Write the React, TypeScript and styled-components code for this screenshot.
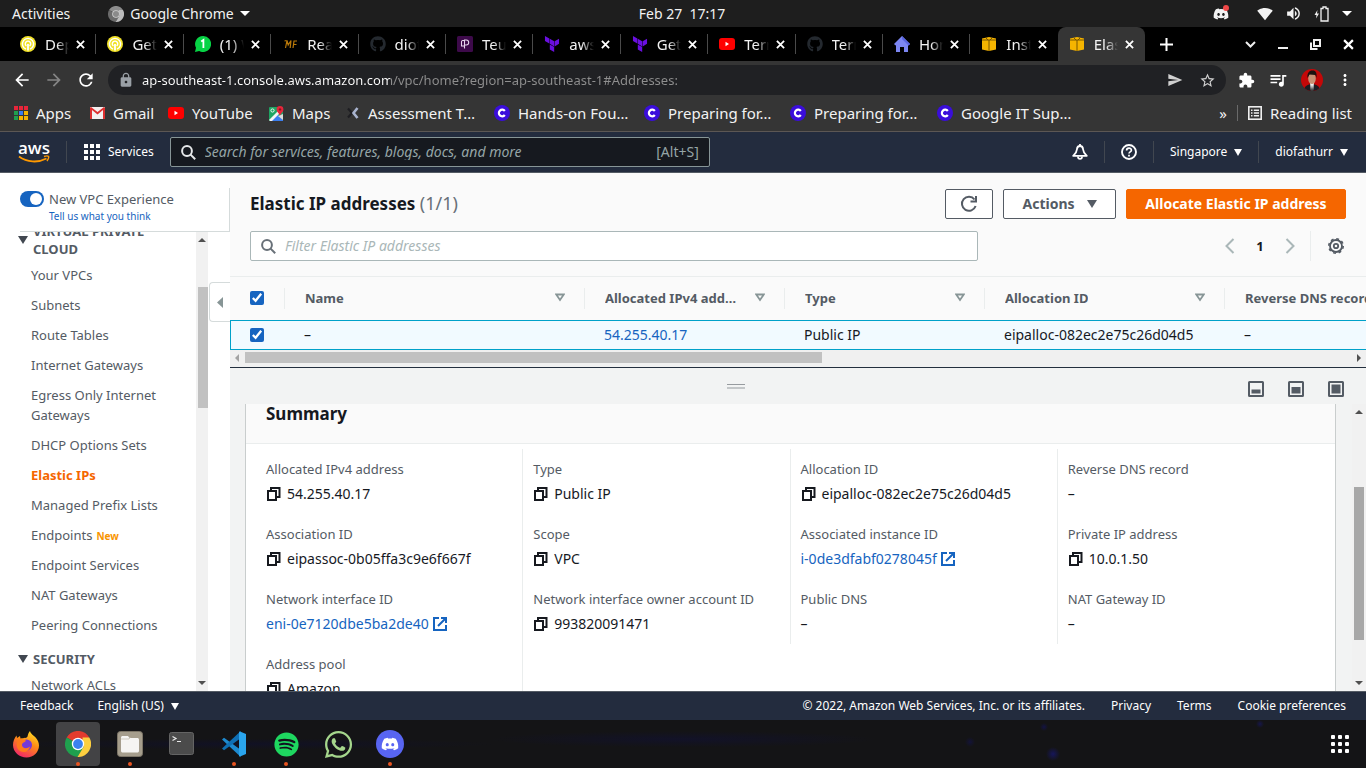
import React from "react";
import styled, { createGlobalStyle, css } from "styled-components";
import { FaDiscord, FaGithub, FaWhatsapp, FaSpotify } from "react-icons/fa";
import { SiTerraform } from "react-icons/si";
import {
  MdArrowBack,
  MdArrowForward,
  MdRefresh,
  MdLock,
  MdSend,
  MdStarBorder,
  MdExtension,
  MdQueueMusic,
  MdMoreVert,
  MdSignalWifi4Bar,
  MdVolumeUp,
} from "react-icons/md";

const GlobalStyle = createGlobalStyle`
  * { box-sizing: border-box; }
  html, body, #root { height: 100%; }
  body { margin: 0; background: #161616; font-family: "Noto Sans", "Open Sans", sans-serif; font-size: 13px; }
  button { font: inherit; color: inherit; background: none; border: 0; padding: 0; cursor: pointer; }
  input { font: inherit; }
  a { text-decoration: none; color: inherit; }
  svg { display: block; flex: none; }
  ul { list-style: none; margin: 0; padding: 0; }
  h1, h2, h3, p, dl, dd, dt { margin: 0; font-weight: normal; }
`;

const Desktop = styled.div`
  display: flex;
  flex-direction: column;
  height: 100vh;
  overflow: hidden;
`;

/* ---------- desktop top bar ---------- */

const TopBar = styled.header`
  display: grid;
  grid-template-columns: 1fr auto 1fr;
  align-items: center;
  flex: none;
  height: 27px;
  padding: 0 14px 0 12px;
  background: #1e1e1e;
  color: #f2f2f2;
  font-size: 14px;
  line-height: 20px;
`;

const TopGroup = styled.div<{ $end?: boolean }>`
  display: flex;
  align-items: center;
  justify-content: ${(p) => (p.$end ? "flex-end" : "flex-start")};
  gap: ${(p) => (p.$end ? "12px" : "38px")};
`;

const AppMenu = styled.button`
  display: flex;
  align-items: center;
  gap: 6px;
`;

const TrayDiscord = styled.span`
  position: relative;
  margin-right: 16px;
`;

const TrayDot = styled.span`
  position: absolute;
  top: -1px;
  right: 0;
  width: 6px;
  height: 6px;
  border-radius: 50%;
  background: #f04848;
`;

/* ---------- browser ---------- */

const TabStrip = styled.div`
  display: flex;
  flex: none;
  height: 34px;
  padding-left: 9px;
  background: #000;
  color: #f2f2f2;
`;

const TabList = styled.div`
  display: flex;
  flex: 1;
  min-width: 0;
`;

const Tab = styled.div<{ $active?: boolean; $divider?: boolean }>`
  display: flex;
  flex: 1 1 0;
  min-width: 0;
  align-items: center;
  padding: 0 11px;
  position: relative;
  ${(p) =>
    p.$active &&
    css`
      background: #353535;
      border-radius: 8px 8px 0 0;
    `}
  ${(p) =>
    p.$divider &&
    css`
      &::after {
        content: "";
        position: absolute;
        right: 0;
        top: 7px;
        height: 20px;
        width: 1px;
        background: #4a4a4a;
      }
    `}
`;

const TabButton = styled.button`
  display: flex;
  align-items: center;
  flex: 1;
  min-width: 0;
  gap: 9px;
  text-align: left;
`;

const TabTitle = styled.span`
  flex: 1;
  min-width: 0;
  overflow: hidden;
  white-space: nowrap;
  font-size: 15px;
  line-height: 20px;
  mask-image: linear-gradient(to right, #000 50%, transparent 100%);
`;

const TabClose = styled.button`
  margin-left: 7px;
`;

const WindowControls = styled.div`
  display: flex;
  align-items: center;
  flex: none;
  width: 221px;
  padding: 0 12px 0 15px;
`;

const ControlGroup = styled.div`
  display: flex;
  align-items: center;
  gap: 22px;
  margin-left: auto;
`;

const Toolbar = styled.div`
  display: flex;
  align-items: center;
  flex: none;
  height: 38px;
  padding: 0 12px;
  gap: 12px;
  background: #353535;
  color: #fff;
`;

const Omnibox = styled.div`
  display: flex;
  align-items: center;
  flex: 1;
  height: 30px;
  padding: 0 10px;
  gap: 8px;
  border-radius: 15px;
  background: #202124;
  color: #9aa0a6;
`;

const UrlInput = styled.input`
  flex: 1;
  min-width: 0;
  border: 0;
  outline: 0;
  padding: 0;
  height: 20px;
  font-size: 13px;
  color: transparent;
  background: linear-gradient(to right, #fff 248px, #8f8f8f 248px);
  background-clip: text;
  -webkit-background-clip: text;
`;

const OmniActions = styled.div`
  display: flex;
  gap: 16px;
  color: #d0d0d0;
`;

const ToolbarEnd = styled.div`
  display: flex;
  align-items: center;
  gap: 13px;
`;

const Bookmarks = styled.nav`
  display: flex;
  align-items: center;
  flex: none;
  height: 33px;
  padding: 0 14px 4px 14px;
  background: #353535;
  border-bottom: 1px solid #5c5754;
  color: #f2f2f2;
  font-size: 15px;
  line-height: 20px;
`;

const Bookmark = styled.a<{ $width?: number }>`
  display: flex;
  align-items: center;
  gap: 8px;
  flex: none;
  width: ${(p) => (p.$width ? `${p.$width}px` : "auto")};
  white-space: nowrap;
`;

const BookmarkEnd = styled.div`
  display: flex;
  align-items: center;
  gap: 10px;
  margin-left: auto;
`;

const Rule = styled.span<{ $height: number; $color: string }>`
  width: 1px;
  height: ${(p) => p.$height}px;
  background: ${(p) => p.$color};
  flex: none;
`;

/* ---------- console navigation ---------- */

const ConsoleNav = styled.nav`
  display: flex;
  align-items: center;
  flex: none;
  height: 41px;
  padding: 0 18px;
  background: #232c3e;
  border-bottom: 1px solid #545b64;
  color: #fff;
  font-size: 12px;
  line-height: 16px;
`;

const AwsLogo = styled.a`
  display: flex;
  flex-direction: column;
  align-items: center;
  width: 32px;
  margin-right: 16px;
  font: 600 17px/14px "Open Sans", sans-serif;
`;

const ServicesButton = styled.button`
  display: flex;
  align-items: center;
  gap: 8px;
  margin: 0 16px 0 17px;
`;

const ConsoleSearch = styled.label`
  display: flex;
  align-items: center;
  width: 540px;
  height: 30px;
  padding: 0 10px;
  gap: 9px;
  background: #16191f;
  border: 1px solid #879596;
  border-radius: 2px;
  font-size: 14px;
`;

const PlainInput = styled.input<{ $hint: string }>`
  flex: 1;
  min-width: 0;
  border: 0;
  outline: 0;
  padding: 0;
  background: none;
  font-size: 14px;
  &::placeholder {
    color: ${(p) => p.$hint};
    font-style: italic;
    opacity: 1;
  }
`;

const Shortcut = styled.span`
  color: #95a5a6;
`;

const NavEnd = styled.div`
  display: flex;
  align-items: center;
  gap: 16px;
  margin-left: auto;
`;

const NavMenu = styled.button`
  display: flex;
  align-items: center;
  gap: 7px;
`;

/* ---------- console body ---------- */

const Body = styled.div`
  display: flex;
  flex: 1;
  min-height: 0;
  background: #fff;
  color: #16191f;
  line-height: 20px;
`;

const Sidebar = styled.aside`
  display: flex;
  flex-direction: column;
  flex: none;
  width: 230px;
  position: relative;
  background: #fff;
  color: #545b64;
`;

const SidebarHead = styled.div`
  flex: none;
  height: 44px;
  margin-top: 15px;
  margin-left: 20px;
  border-right: 1px solid #d5dbdb;
  border-bottom: 1px solid #d5dbdb;
`;

const SwitchLabel = styled.label`
  display: flex;
  align-items: center;
  gap: 5px;
  height: 21px;
`;

const Switch = styled.input`
  appearance: none;
  width: 24px;
  height: 16px;
  margin: 0;
  border-radius: 8px;
  background: #1664c0;
  &::before {
    content: "";
    display: block;
    width: 12px;
    height: 12px;
    margin: 2px 2px 2px 10px;
    border-radius: 50%;
    background: #fff;
  }
`;

const FeedbackLink = styled.a`
  display: block;
  margin-left: 29px;
  color: #1664c0;
  font-size: 10px;
  line-height: 14px;
`;

const SidebarScroll = styled.div`
  display: flex;
  flex: 1;
  min-height: 0;
  overflow: hidden;
  margin-right: 22px;
`;

const NavList = styled.div`
  flex: 1;
  margin-top: -10px;
`;

const NavHeading = styled.h3`
  display: flex;
  align-items: center;
  gap: 5px;
  padding: 0 30px 0 18px;
  font-weight: bold;
  font-size: 13px;
  line-height: 18px;
`;

const NavGroup = styled.ul`
  padding: 2px 8px 10px 31px;
`;

const NavItem = styled.li`
  padding: 5px 0;
`;

const NavLink = styled.a<{ $active?: boolean }>`
  color: ${(p) => (p.$active ? "#f56600" : "#545b64")};
  font-weight: ${(p) => (p.$active ? "bold" : "normal")};
`;

const NewTag = styled.span`
  margin-left: 4px;
  color: #f89400;
  font-size: 10px;
  line-height: 12px;
  font-weight: bold;
`;

const VScroll = styled.div<{ $width: number }>`
  display: flex;
  flex-direction: column;
  align-items: center;
  flex: none;
  width: ${(p) => p.$width}px;
  padding: 6px 0;
  background: #f1f1f1;
`;

const VTrack = styled.div<{ $inset: number }>`
  flex: 1;
  width: 100%;
  display: flex;
  flex-direction: column;
  align-items: flex-end;
  padding-right: ${(p) => p.$inset}px;
`;

const VThumb = styled.div<{ $before: number; $size: number; $after: number; $color: string }>`
  width: 10px;
  height: ${(p) => (p.$size / (p.$before + p.$size + p.$after)) * 100}%;
  margin-top: ${(p) => p.$before}px;
  background: ${(p) => p.$color};
`;

const CollapseButton = styled.button`
  position: absolute;
  right: 0;
  top: 109px;
  width: 21px;
  height: 40px;
  display: flex;
  align-items: center;
  justify-content: center;
  background: #fff;
  border: 1px solid #d5dbdb;
  border-right: 0;
  border-radius: 4px 0 0 4px;
`;

const Main = styled.main`
  display: flex;
  flex-direction: column;
  flex: 1;
  min-width: 0;
  background: #fafafa;
`;

const PageHead = styled.div`
  display: flex;
  align-items: center;
  flex: none;
  gap: 10px;
  padding: 15px 20px 12px 20px;
`;

const Title = styled.h1`
  flex: 1;
  font-size: 17px;
  line-height: 30px;
  font-weight: bold;
`;

const Count = styled.span`
  color: #687078;
  font-size: 18px;
  font-weight: normal;
`;

const Button = styled.button<{ $primary?: boolean; $width: number }>`
  display: flex;
  align-items: center;
  justify-content: center;
  gap: 12px;
  min-width: ${(p) => p.$width}px;
  height: 30px;
  border: 1px solid ${(p) => (p.$primary ? "#f56600" : "#545b64")};
  border-radius: 2px;
  background: ${(p) => (p.$primary ? "#f56600" : "#fff")};
  color: ${(p) => (p.$primary ? "#fff" : "#545b64")};
  font-size: 14px;
  font-weight: bold;
`;

const FilterRow = styled.div`
  display: flex;
  align-items: center;
  justify-content: space-between;
  flex: none;
  padding: 0 20px 15px 20px;
`;

const FilterBox = styled.label`
  display: flex;
  align-items: center;
  width: 66.4%;
  height: 30px;
  padding: 0 10px;
  gap: 9px;
  background: #fff;
  border: 1px solid #aab7b8;
  border-radius: 2px;
`;

const Pagination = styled.div`
  display: flex;
  align-items: center;
  height: 30px;
`;

const PageStep = styled.button`
  width: 20px;
  display: flex;
  justify-content: center;
`;

const PageNumber = styled.button`
  width: 40px;
  font-weight: bold;
`;

const GearButton = styled.button`
  margin-left: 10px;
  padding: 0 2px 0 17px;
  height: 30px;
  border-left: 1px solid #eaeded;
`;

const TableWrap = styled.div`
  overflow: hidden;
  flex: none;
  border-top: 1px solid #eaeded;
`;

const Table = styled.table`
  table-layout: fixed;
  width: 1264px;
  border-collapse: separate;
  border-spacing: 0;
  th,
  td {
    padding: 0 20px;
    text-align: left;
    white-space: nowrap;
  }
  th {
    height: 43px;
    padding-bottom: 2px;
    color: #545b64;
    font-weight: bold;
  }
  td {
    height: 30px;
    padding-left: 19px;
    background: #f1faff;
    border-top: 1px solid #00a1c9;
    border-bottom: 1px solid #00a1c9;
    font-size: 14px;
  }
  td:first-child {
    border-left: 1px solid #00a1c9;
  }
`;

const HeadCell = styled.div`
  display: flex;
  align-items: center;
  justify-content: space-between;
  height: 20px;
`;

const ThSized = styled.th<{ $w: number }>`
  width: ${(p) => p.$w}px;
  background: linear-gradient(#eaeded, #eaeded) right 50% / 1px 21px no-repeat;
`;

const HeadText = styled.span`
  overflow: hidden;
  text-overflow: ellipsis;
  max-width: 135px;
`;

const Check = styled.input`
  display: block;
  width: 14px;
  height: 14px;
  margin: 0;
  accent-color: #1664c0;
`;

const TextLink = styled.a`
  color: #1664c0;
`;

const HScroll = styled.div`
  display: flex;
  align-items: center;
  flex: none;
  height: 17px;
  padding: 0 5px 2px 5px;
  background: #f0f0f0;
`;

const HTrack = styled.div`
  flex: 1;
  margin: 0 6px;
`;

const HThumb = styled.div`
  width: 52.2%;
  height: 11px;
  background: #c1c1c1;
`;

const SplitPanel = styled.section`
  display: flex;
  flex-direction: column;
  flex: 1;
  min-height: 0;
  background: #f2f3f3;
  border-top: 1px solid #232f3e;
`;

const SplitBar = styled.div`
  display: grid;
  grid-template-columns: 1fr auto 1fr;
  align-items: center;
  flex: none;
  height: 36px;
  padding: 6px 22px 0 0;
`;

const DragHandle = styled.button`
  grid-column: 2;
  align-self: start;
  width: 18px;
  height: 5px;
  margin-top: 10px;
  margin-right: 102px;
  border-top: 1px solid #979b9f;
  border-bottom: 2px solid #c3c6c8;
`;

const PanelButtons = styled.div`
  display: flex;
  justify-content: flex-end;
  gap: 24px;
`;

const PanelBody = styled.div`
  display: flex;
  flex: 1;
  min-height: 0;
  overflow: hidden;
`;

const Card = styled.div`
  flex: 1;
  min-width: 0;
  margin: 0 16px 0 15px;
  background: #fff;
  border: 1px solid #c9cdcd;
  border-width: 0 1px;
`;

const CardHead = styled.h2`
  height: 40px;
  padding: 0 20px;
  background: #fafafa;
  border-bottom: 1px solid #eaeded;
  font-size: 17px;
  line-height: 20px;
  font-weight: bold;
`;

const Columns = styled.div`
  display: grid;
  grid-template-columns: repeat(4, 1fr);
  align-items: start;
  padding: 5px 10px;
`;

const Column = styled.dl`
  min-width: 0;
  border-right: 1px solid #eaeded;
  &:last-child {
    border-right: 0;
  }
`;

const Field = styled.div`
  padding: 10px;
  height: 65px;
`;

const FieldName = styled.dt`
  color: #545b64;
  white-space: nowrap;
`;

const FieldValue = styled.dd`
  display: flex;
  align-items: center;
  gap: 5px;
  margin-top: 5px;
  white-space: nowrap;
  font-size: 14px;
`;

const ValueLink = styled.a`
  display: flex;
  align-items: center;
  gap: 3px;
  color: #1664c0;
`;

const Footer = styled.footer`
  display: flex;
  align-items: center;
  flex: none;
  height: 29px;
  padding: 0 20px;
  background: #232c3e;
  border-top: 1px solid #545b64;
  color: #fff;
  font-size: 12px;
  line-height: 16px;
`;

const FooterGroup = styled.div<{ $end?: boolean }>`
  display: flex;
  gap: ${(p) => (p.$end ? "26px" : "24px")};
  margin-left: ${(p) => (p.$end ? "auto" : "0")};
`;

/* ---------- dock ---------- */

const Dock = styled.nav`
  display: flex;
  align-items: center;
  flex: none;
  height: 48px;
  padding: 0 17px 0 4px;
  gap: 8px;
  color: #fff;
  background: radial-gradient(circle at 1053px 34px, #16165a 0, transparent 7px),
    radial-gradient(circle at 1260px 4px, #16164a 0, transparent 4px),
    radial-gradient(circle at 1044px 7px, #131344 0, transparent 4px),
    radial-gradient(circle at 970px 22px, #131338 0, transparent 5px),
    radial-gradient(ellipse at 50% 40%, #121228 0, transparent 20%),
    radial-gradient(ellipse at 18% 50%, #111124 0, transparent 16%), #141416;
`;

const DockItem = styled.button<{ $active?: boolean; $running?: boolean }>`
  position: relative;
  display: flex;
  align-items: center;
  justify-content: center;
  width: 44px;
  height: 44px;
  border-radius: 4px;
  background: ${(p) => (p.$active ? "#434345" : "none")};
  ${(p) =>
    p.$running &&
    css`
      &::after {
        content: "";
        position: absolute;
        bottom: 0;
        width: 4px;
        height: 4px;
        border-radius: 50%;
        background: #e95420;
      }
    `}
`;

const DockEnd = styled.button`
  margin-left: auto;
`;

/* ---------- drawings ---------- */

const Caret = ({ w = 8, h = 7, color = "#fff" }: { w?: number; h?: number; color?: string }) => (
  <svg width={w} height={h} viewBox="0 0 8 7" preserveAspectRatio="none" aria-hidden>
    <path d="M0 0h8L4 7z" fill={color} />
  </svg>
);

const CloseMark = ({ size }: { size: number }) => (
  <svg width={size} height={size} viewBox="0 0 10 10" fill="none" stroke="#fff" strokeWidth="2" aria-hidden>
    <path d="M1 1l8 8M9 1L1 9" />
  </svg>
);

const ScrollArrow = ({ dir, color = "#505050" }: { dir: "up" | "down" | "left" | "right"; color?: string }) => {
  const paths = { up: "M0 4l4-4 4 4z", down: "M0 0h8L4 4z", left: "M4 0v8L0 4z", right: "M0 0v8l4-4z" };
  const vertical = dir === "up" || dir === "down";
  return (
    <svg width={vertical ? 8 : 4} height={vertical ? 4 : 8} aria-hidden>
      <path d={paths[dir]} fill={color} />
    </svg>
  );
};

const GridDots = ({ size, dot, round }: { size: number; dot: number; round: number }) => {
  const step = (size - dot) / 2;
  return (
    <svg width={size} height={size} aria-hidden>
      {[0, 1, 2].map((r) =>
        [0, 1, 2].map((c) => (
          <rect key={`${r}${c}`} x={c * step} y={r * step} width={dot} height={dot} rx={round} fill="#fff" />
        )),
      )}
    </svg>
  );
};

const ChromeIcon = ({ size, mono }: { size: number; mono?: boolean }) => {
  const c = mono ? ["#8b8b8b", "#6b6b6b", "#bdbdbd", "#8a8a8a"] : ["#e33b2e", "#1fa04e", "#fdcf3f", "#3b82f0"];
  return (
    <svg width={size} height={size} viewBox="0 0 26 26" aria-hidden>
      <path d="M13 13L1.7 6.5A13 13 0 0 1 24.3 6.5z" fill={c[0]} />
      <path d="M1.7 6.5A13 13 0 0 0 12.5 26l6.2-9.6L13 13z" fill={c[1]} />
      <path d="M24.3 6.5A13 13 0 0 1 12.5 26L18.5 16l-1-9.5z" fill={c[2]} />
      <circle cx="13" cy="13" r="6.2" fill={mono ? "#d0d0d0" : "#fff"} />
      <circle cx="13" cy="13" r="4.9" fill={c[3]} />
    </svg>
  );
};

const OpenIcon = () => (
  <svg width="16" height="16" viewBox="0 0 16 16" aria-hidden>
    <circle cx="8" cy="8" r="8" fill="#f2e22a" />
    <g fill="none" stroke="#fff" strokeWidth="1.4">
      <path d="M6 13.2A5.6 5.6 0 1 1 10 13.2" />
      <path d="M6.4 10A2.7 2.7 0 1 1 9.6 10" />
      <path d="M8 8v6.5" strokeWidth="1.8" />
    </g>
  </svg>
);

const WhatsAppBadge = () => (
  <svg width="16" height="16" viewBox="0 0 16 16" aria-hidden>
    <path d="M8 0a8 8 0 1 1-3.8 15L0 16l1-4.2A8 8 0 0 1 8 0z" fill="#07d345" />
    <path d="M6.2 5.4L8.4 4v8" fill="none" stroke="#fff" strokeWidth="1.8" />
  </svg>
);

const MfIcon = () => (
  <svg width="16" height="16" viewBox="0 0 16 16" fill="none" stroke="#b9790a" strokeWidth="1.2" aria-hidden>
    <path d="M3.5 12L5 4.5 6.2 9 9 4.5 8.2 12M11 12l1-7h3M11.5 8.5h3M2.500 5l2-.5" />
  </svg>
);

const PluralIcon = () => (
  <svg width="16" height="16" viewBox="0 0 16 16" aria-hidden>
    <rect width="16" height="16" rx="1.5" fill="#3d0a4a" />
    <path
      d="M7.500 12.500V4h1.700a2.500 2.500 0 0 1 0 5H7.500M7.500 4.500H5.500a1.300 1.300 0 0 0-1 1.300V10h2.500"
      fill="none"
      stroke="#e7d6ec"
      strokeWidth="1.1"
    />
  </svg>
);

const HouseIcon = () => (
  <svg width="16" height="16" viewBox="0 0 16 16" aria-hidden>
    <path d="M8 0l8 8-1.5 1.5L14 9v7h-4v-5H6v5H2V9l-.5.5L0 8z" fill="#7c86f2" />
    <path d="M8 0l8 8-1.5 1.5L8 3z" fill="#5965e0" />
  </svg>
);

const CubeIcon = () => (
  <svg width="16" height="16" viewBox="0 0 16 16" aria-hidden>
    <path d="M1 2.5L8 1l7 1.5v11L8 15l-7-1.500z" fill="#f5b400" />
    <path d="M1 4h14M8 4v11M5 2l2 2M11 2L9 4" stroke="#6b4d00" strokeWidth=".9" fill="none" />
  </svg>
);

const YouTubeIcon = () => (
  <svg width="16" height="12" viewBox="0 0 16 12" aria-hidden>
    <rect width="16" height="12" rx="3" fill="#f00" />
    <path d="M6.5 3.8v4.4L10 6z" fill="#fff" />
  </svg>
);

const AppsIcon = () => {
  const colors = ["#e8253a", "#e8253a", "#e8253a", "#1fa04e", "#3b7ded", "#f5b400", "#1fa04e", "#f5b400", "#f5b400"];
  return (
    <svg width="14" height="14" aria-hidden>
      {colors.map((c, i) => (
        <rect key={i} x={(i % 3) * 5} y={Math.floor(i / 3) * 5} width="4" height="4" fill={c} />
      ))}
    </svg>
  );
};

const GmailIcon = () => (
  <svg width="15" height="12" viewBox="0 0 15 12" aria-hidden>
    <rect width="15" height="12" rx="1" fill="#f4f0f0" />
    <path d="M0 1v11h2V3l5.5 4.5L13 3v9h2V1l-1-1-6.500 5L1 0z" fill="#de2f2f" />
  </svg>
);

const MapsIcon = () => (
  <svg width="15" height="15" viewBox="0 0 15 15" aria-hidden>
    <rect y="1" width="14" height="14" rx="1" fill="#1fa463" />
    <path d="M1 15L8 8l6 6v1z" fill="#3b7ded" />
    <path d="M0 14L9 5l2 2-8 8H1z" fill="#f4f4f4" />
    <path d="M9 10l5 4V8z" fill="#ddd" />
    <circle cx="3.5" cy="4.5" r="1.6" fill="none" stroke="#fff" strokeWidth=".9" />
    <path d="M11 0a3.4 3.4 0 0 1 3.4 3.4C14.4 6 11.5 7 11 10 10.5 7 7.6 6 7.6 3.4A3.4 3.4 0 0 1 11 0z" fill="#e8253a" />
    <circle cx="11" cy="3.4" r="1.2" fill="#8c1220" />
  </svg>
);

const CrossIcon = () => (
  <svg width="14" height="16" viewBox="0 0 14 16" aria-hidden>
    <path d="M2 3.5l4 4.500-4 4.500" fill="none" stroke="#1e1e22" strokeWidth="2.2" />
    <path d="M11.5 3L7.500 8l4 5" fill="none" stroke="#a9b4cf" strokeWidth="2.6" />
  </svg>
);

const CourseIcon = () => (
  <svg width="16" height="16" viewBox="0 0 16 16" aria-hidden>
    <circle cx="8" cy="8" r="8" fill="#3a0ddb" />
    <path d="M10.8 6A3.3 3.3 0 1 0 10.8 10" fill="none" stroke="#fff" strokeWidth="2.2" />
  </svg>
);

const ReadingIcon = () => (
  <svg width="14" height="14" viewBox="0 0 14 14" fill="none" stroke="#eee" strokeWidth="1.6" aria-hidden>
    <rect x=".8" y=".8" width="12.4" height="12.4" />
    <path d="M3 4.300h1.500M3 7h1.500M3 9.700h1.500M5.800 4.300H11M5.800 7H11M5.800 9.700H11" strokeWidth="1.4" />
  </svg>
);

const Portrait = () => (
  <svg width="22" height="22" viewBox="0 0 22 22" aria-hidden>
    <clipPath id="face">
      <circle cx="11" cy="11" r="11" />
    </clipPath>
    <g clipPath="url(#face)">
      <rect width="22" height="22" fill="#c40808" />
      <path d="M3 22c0-5 4-7 8-7s8 2 8 7z" fill="#1c1c22" />
      <path d="M9 14h4l-1 8h-2z" fill="#eee" />
      <path d="M11 16l1 6h-2z" fill="#222" />
      <ellipse cx="11" cy="9.5" rx="3.8" ry="5.5" fill="#c69275" />
      <path d="M6.5 9C6 4 8 1.500 11.500 1.500S16 4 15.500 9l-1-3-6-.5z" fill="#1b1210" />
    </g>
  </svg>
);

const SearchIcon = ({ color }: { color: string }) => (
  <svg width="15" height="15" viewBox="0 0 15 15" fill="none" stroke={color} strokeWidth="2" aria-hidden>
    <circle cx="6" cy="6" r="4.9" />
    <path d="M9.6 9.600l4.600 4.600" />
  </svg>
);

const BellIcon = () => (
  <svg width="16" height="16" viewBox="0 0 16 16" fill="none" stroke="#fff" strokeWidth="1.8" strokeLinejoin="round" aria-hidden>
    <path d="M8 2C6 2 5 3.500 4.900 5.500 4.700 8.500 3.500 9.500 1.200 11.800h13.600C12.500 9.500 11.300 8.500 11.100 5.500 11 3.500 10 2 8 2z" />
    <path d="M8 0v2M6 12.500c0 3.200 4 3.200 4 0" />
  </svg>
);

const HelpIcon = () => (
  <svg width="16" height="16" viewBox="0 0 16 16" fill="none" stroke="#fff" strokeWidth="1.9" aria-hidden>
    <circle cx="8" cy="8" r="7" />
    <path d="M5.600 6.500c0-3.200 4.800-3 4.800-.3C10.400 8 8 7.800 8 9.600" strokeWidth="1.7" />
    <path d="M8 10.700v1.700" strokeWidth="1.8" />
  </svg>
);

const ReloadIcon = () => (
  <svg width="18" height="18" viewBox="0 0 18 18" fill="none" stroke="#545b64" strokeWidth="2" aria-hidden>
    <path d="M15.600 11A7 7 0 1 1 14.500 4.500" />
    <path d="M16 1v5.500h-5.500" />
  </svg>
);

const Chevron = ({ right }: { right?: boolean }) => (
  <svg width="10" height="16" viewBox="0 0 10 16" fill="none" stroke="#aab7b8" strokeWidth="2" aria-hidden>
    <path d={right ? "M1.500 1l7 7-7 7" : "M8.500 1l-7 7 7 7"} />
  </svg>
);

const GearIcon = () => (
  <svg width="16" height="16" viewBox="0 0 16 16" fill="none" stroke="#545b64" aria-hidden>
    <circle cx="8" cy="8" r="6" strokeWidth="1.8" />
    <circle cx="8" cy="8" r="7.2" strokeWidth="1.6" strokeDasharray="2.83 2.83" />
    <circle cx="8" cy="8" r="2.2" strokeWidth="1.8" />
  </svg>
);

const SortIcon = () => (
  <svg width="10" height="9" viewBox="0 0 10 9" aria-hidden>
    <path d="M1.200 1.500h7.600L5 7z" fill="none" stroke="#879596" strokeWidth="1.8" />
  </svg>
);

const CopyIcon = () => (
  <svg width="16" height="16" viewBox="0 0 16 16" fill="none" stroke="#16191f" strokeWidth="2" aria-hidden>
    <path d="M2 5h8v9H2z" />
    <path d="M5 4.500V2h8.500v9H11" />
  </svg>
);

const ExternalIcon = () => (
  <svg width="16" height="16" viewBox="0 0 16 16" fill="none" stroke="#1664c0" strokeWidth="2" aria-hidden>
    <path d="M7 2H2v12h12V9" />
    <path d="M9 2h5v5M13.500 2.500L6 10" />
  </svg>
);

const PanelIcon = ({ top }: { top: number }) => (
  <svg width="16" height="16" viewBox="0 0 16 16" aria-hidden>
    <rect x="1" y="1" width="14" height="14" rx=".5" fill="#f2f3f3" stroke="#545b64" strokeWidth="2" />
    <rect x="3.5" y={top} width="9" height={12.5 - top} fill="#545b64" />
  </svg>
);

const FirefoxIcon = () => (
  <svg width="28" height="28" viewBox="0 0 28 28" aria-hidden>
    <defs>
      <linearGradient id="ffBody" x1=".8" y1="0" x2=".3" y2="1">
        <stop offset="0" stopColor="#ffe326" />
        <stop offset=".45" stopColor="#ff8a16" />
        <stop offset="1" stopColor="#f0246a" />
      </linearGradient>
    </defs>
    <path
      d="M18 1c.5 3 4 4.500 6 7 1.500 2 3 4 3 7.500C27 22 21.500 27.500 14.500 27.500S1 22 1 15c0-4 1.500-7 3.500-9.500L5 8l3-2 .5 2.500C12 8 15 8 15.500 6.500 16 4.500 16.500 2.500 18 1z"
      fill="url(#ffBody)"
    />
    <circle cx="14.5" cy="15" r="5.500" fill="#7538d8" />
    <path d="M6 10c3-1.500 5 0 8 .5-1 2-4 2-4 4.500 0 3 4.500 4.500 8 1.500-1 5-6 7-10 4.500S4 13 6 10z" fill="#ff7a1c" />
  </svg>
);

const FilesIcon = () => (
  <svg width="26" height="26" viewBox="0 0 26 26" aria-hidden>
    <rect x=".5" y=".5" width="25" height="25" rx="3" fill="#a69e8d" stroke="#7d7668" />
    <path d="M4 7c0-1.500.5-2 2-2h5l1.500 2H20c1.500 0 2 .5 2 2v10.500c0 1.500-.5 2-2 2H6c-1.500 0-2-.5-2-2z" fill="#f6f5f3" />
    <path d="M4 8h8l1-1.500" stroke="#cfcac0" fill="none" />
  </svg>
);

const TerminalIcon = () => (
  <svg width="26" height="24" viewBox="0 0 26 24" aria-hidden>
    <rect x=".5" y=".5" width="24" height="22" rx="2" fill="#4b4b4b" stroke="#646464" />
    <path d="M3.500 4.500L7 6.500 3.500 8.500M8 9.500h4" fill="none" stroke="#e8e8e8" strokeWidth="1.2" />
  </svg>
);

const CodeIcon = () => (
  <svg width="26" height="26" viewBox="0 0 26 26" aria-hidden>
    <path d="M1 8.500l2-1.700L20 19v6.500l-1-.3z" fill="#1d8ad0" />
    <path d="M1 17.500l2 1.700L20 7V.5l-1 .3z" fill="#0f6fb5" />
    <path d="M19 .5l6 2.500v20l-6 2.500c-.7.200-1-.2-1-.5V1c0-.4.4-.7 1-.5z" fill="#2aa5ee" />
  </svg>
);

/* ---------- data ---------- */

const tabs: { title: string; icon: React.ReactNode }[] = [
  { title: "Deploy", icon: <OpenIcon /> },
  { title: "Get st", icon: <OpenIcon /> },
  { title: "(1) Wh", icon: <WhatsAppBadge /> },
  { title: "Read", icon: <MfIcon /> },
  { title: "diofat", icon: <FaGithub size={16} color="#24292f" /> },
  { title: "Teuku", icon: <PluralIcon /> },
  { title: "aws_e", icon: <SiTerraform size={16} color="#6a0fe0" /> },
  { title: "Get st", icon: <SiTerraform size={16} color="#6a0fe0" /> },
  { title: "Terraf", icon: <YouTubeIcon /> },
  { title: "Terraf", icon: <FaGithub size={16} color="#24292f" /> },
  { title: "Home", icon: <HouseIcon /> },
  { title: "Instan", icon: <CubeIcon /> },
  { title: "Elastic", icon: <CubeIcon /> },
];

const bookmarks: { label: string; icon: React.ReactNode; width: number }[] = [
  { label: "Apps", icon: <AppsIcon />, width: 76 },
  { label: "Gmail", icon: <GmailIcon />, width: 78 },
  { label: "YouTube", icon: <YouTubeIcon />, width: 101 },
  { label: "Maps", icon: <MapsIcon />, width: 77 },
  { label: "Assessment T…", icon: <CrossIcon />, width: 148 },
  { label: "Hands-on Fou…", icon: <CourseIcon />, width: 150 },
  { label: "Preparing for…", icon: <CourseIcon />, width: 146 },
  { label: "Preparing for…", icon: <CourseIcon />, width: 147 },
  { label: "Google IT Sup…", icon: <CourseIcon />, width: 140 },
];

const vpcLinks = [
  "Your VPCs",
  "Subnets",
  "Route Tables",
  "Internet Gateways",
  "Egress Only Internet Gateways",
  "DHCP Options Sets",
  "Elastic IPs",
  "Managed Prefix Lists",
  "Endpoints",
  "Endpoint Services",
  "NAT Gateways",
  "Peering Connections",
];

const columns: [string, number][] = [
  ["Name", 300],
  ["Allocated IPv4 address", 200],
  ["Type", 200],
  ["Allocation ID", 240],
];

type Detail = { name: string; value: string; kind: "copy" | "link" | "text" };

const details: Detail[][] = [
  [
    { name: "Allocated IPv4 address", value: "54.255.40.17", kind: "copy" },
    { name: "Association ID", value: "eipassoc-0b05ffa3c9e6f667f", kind: "copy" },
    { name: "Network interface ID", value: "eni-0e7120dbe5ba2de40", kind: "link" },
    { name: "Address pool", value: "Amazon", kind: "copy" },
  ],
  [
    { name: "Type", value: "Public IP", kind: "copy" },
    { name: "Scope", value: "VPC", kind: "copy" },
    { name: "Network interface owner account ID", value: "993820091471", kind: "copy" },
  ],
  [
    { name: "Allocation ID", value: "eipalloc-082ec2e75c26d04d5", kind: "copy" },
    { name: "Associated instance ID", value: "i-0de3dfabf0278045f", kind: "link" },
    { name: "Public DNS", value: "–", kind: "text" },
  ],
  [
    { name: "Reverse DNS record", value: "–", kind: "text" },
    { name: "Private IP address", value: "10.0.1.50", kind: "copy" },
    { name: "NAT Gateway ID", value: "–", kind: "text" },
  ],
];

const dockApps: { name: string; icon: React.ReactNode; active?: boolean; running?: boolean }[] = [
  { name: "Firefox", icon: <FirefoxIcon /> },
  { name: "Google Chrome", icon: <ChromeIcon size={26} />, active: true, running: true },
  { name: "Files", icon: <FilesIcon />, running: true },
  { name: "Terminal", icon: <TerminalIcon /> },
  { name: "Visual Studio Code", icon: <CodeIcon />, running: true },
  { name: "Spotify", icon: <FaSpotify size={25} color="#1ed760" />, running: true },
  { name: "WhatsApp", icon: <FaWhatsapp size={31} color="#a5d68c" /> },
  {
    name: "Discord",
    icon: (
      <svg width="28" height="28" viewBox="0 0 28 28" aria-hidden>
        <circle cx="14" cy="14" r="14" fill="#5865f2" />
        <FaDiscord x={5} y={5} size={18} color="#fff" />
      </svg>
    ),
    running: true,
  },
];

/* ---------- sections ---------- */

const DetailField = ({ name, value, kind }: Detail) => (
  <Field>
    <FieldName>{name}</FieldName>
    <FieldValue>
      {kind === "copy" && (
        <button aria-label={`Copy ${name}`}>
          <CopyIcon />
        </button>
      )}
      {kind === "link" ? (
        <ValueLink href="#details">
          {value}
          <ExternalIcon />
        </ValueLink>
      ) : (
        <span>{value}</span>
      )}
    </FieldValue>
  </Field>
);

const BrowserChrome = () => (
  <>
    <TabStrip>
      <TabList>
        {tabs.map((t, i) => (
          <Tab key={i} $active={i === 12} $divider={i < 11}>
            <TabButton>
              {t.icon}
              <TabTitle>{t.title}</TabTitle>
            </TabButton>
            <TabClose aria-label="Close tab">
              <CloseMark size={9} />
            </TabClose>
          </Tab>
        ))}
      </TabList>
      <WindowControls>
        <button aria-label="New tab">
          <svg width="13" height="13" viewBox="0 0 13 13" stroke="#fff" strokeWidth="2" aria-hidden>
            <path d="M6.500 0v13M0 6.500h13" />
          </svg>
        </button>
        <ControlGroup>
          <button aria-label="Search tabs">
            <svg width="11" height="7" viewBox="0 0 11 7" fill="none" stroke="#eee" strokeWidth="2" aria-hidden>
              <path d="M1 1l4.500 4.500L10 1" />
            </svg>
          </button>
          <button aria-label="Minimize">
            <svg width="10" height="10" aria-hidden>
              <path d="M0 8h10v2H0z" fill="#eee" />
            </svg>
          </button>
          <button aria-label="Restore">
            <svg width="11" height="11" viewBox="0 0 11 11" fill="none" stroke="#eee" strokeWidth="2" aria-hidden>
              <path d="M4 1h6v6H4z" />
              <path d="M1 3.500V10h6.500" />
            </svg>
          </button>
          <button aria-label="Close window">
            <CloseMark size={11} />
          </button>
        </ControlGroup>
      </WindowControls>
    </TabStrip>
    <Toolbar>
      <button aria-label="Back">
        <MdArrowBack size={20} />
      </button>
      <button aria-label="Forward">
        <MdArrowForward size={20} color="#858585" />
      </button>
      <button aria-label="Reload">
        <MdRefresh size={20} />
      </button>
      <Omnibox>
        <MdLock size={16} />
        <UrlInput
          aria-label="Address"
          defaultValue="ap-southeast-1.console.aws.amazon.com/vpc/home?region=ap-southeast-1#Addresses:"
        />
        <OmniActions>
          <button aria-label="Share">
            <MdSend size={16} />
          </button>
          <button aria-label="Bookmark this page">
            <MdStarBorder size={17} />
          </button>
        </OmniActions>
      </Omnibox>
      <ToolbarEnd>
        <button aria-label="Extensions">
          <MdExtension size={17} />
        </button>
        <button aria-label="Media">
          <MdQueueMusic size={20} />
        </button>
        <button aria-label="Profile">
          <Portrait />
        </button>
        <button aria-label="Menu">
          <MdMoreVert size={18} />
        </button>
      </ToolbarEnd>
    </Toolbar>
    <Bookmarks>
      {bookmarks.map((b, i) => (
        <Bookmark key={i} href="#bookmark" $width={b.width}>
          {b.icon}
          {b.label}
        </Bookmark>
      ))}
      <BookmarkEnd>
        <button aria-label="More bookmarks">»</button>
        <Rule $height={16} $color="#6a6a6a" />
        <Bookmark href="#reading-list">
          <ReadingIcon />
          Reading list
        </Bookmark>
      </BookmarkEnd>
    </Bookmarks>
  </>
);

const ConsoleHeader = () => (
  <ConsoleNav>
    <AwsLogo href="#home">
      aws
      <svg width="32" height="8" viewBox="0 0 32 8" fill="none" stroke="#f90" aria-hidden>
        <path d="M1 1.500C9 7.500 20 8 28.500 3.500" strokeWidth="1.8" />
        <path d="M26 1.500c2-.6 4-.7 4.500 0s-.4 3-1.500 4.500" strokeWidth="1.4" />
      </svg>
    </AwsLogo>
    <Rule $height={22} $color="#414750" />
    <ServicesButton>
      <GridDots size={16} dot={4} round={0} />
      Services
    </ServicesButton>
    <ConsoleSearch>
      <SearchIcon color="#e6e8ea" />
      <PlainInput
        $hint="#95a5a6"
        aria-label="Search"
        placeholder="Search for services, features, blogs, docs, and more"
      />
      <Shortcut>[Alt+S]</Shortcut>
    </ConsoleSearch>
    <NavEnd>
      <button aria-label="Notifications">
        <BellIcon />
      </button>
      <Rule $height={22} $color="#414750" />
      <button aria-label="Help">
        <HelpIcon />
      </button>
      <Rule $height={22} $color="#414750" />
      <NavMenu>
        Singapore <Caret />
      </NavMenu>
      <Rule $height={22} $color="#414750" />
      <NavMenu>
        diofathurr <Caret />
      </NavMenu>
    </NavEnd>
  </ConsoleNav>
);

const SideNavigation = () => (
  <Sidebar>
    <SidebarHead>
      <SwitchLabel>
        <Switch type="checkbox" role="switch" defaultChecked />
        New VPC Experience
      </SwitchLabel>
      <FeedbackLink href="#feedback">Tell us what you think</FeedbackLink>
    </SidebarHead>
    <SidebarScroll>
      <NavList>
        <NavHeading>
          <Caret w={10} h={8} color="#414750" />
          VIRTUAL PRIVATE CLOUD
        </NavHeading>
        <NavGroup>
          {vpcLinks.map((l) => (
            <NavItem key={l}>
              <NavLink href="#vpc" $active={l === "Elastic IPs"}>
                {l}
              </NavLink>
              {l === "Endpoints" && <NewTag>New</NewTag>}
            </NavItem>
          ))}
        </NavGroup>
        <NavHeading>
          <Caret w={10} h={8} color="#414750" />
          SECURITY
        </NavHeading>
        <NavGroup>
          <NavItem>
            <NavLink href="#acls">Network ACLs</NavLink>
          </NavItem>
        </NavGroup>
      </NavList>
      <VScroll $width={12}>
        <ScrollArrow dir="up" />
        <VTrack $inset={0}>
          <VThumb $before={45} $size={121} $after={273} $color="#c1c1c1" />
        </VTrack>
        <ScrollArrow dir="down" />
      </VScroll>
    </SidebarScroll>
    <CollapseButton aria-label="Collapse navigation">
      <svg width="6" height="11" aria-hidden>
        <path d="M6 0v11L0 5.500z" fill="#879596" />
      </svg>
    </CollapseButton>
  </Sidebar>
);

const AddressTable = () => (
  <>
    <TableWrap>
      <Table>
        <thead>
          <tr>
            <ThSized $w={55}>
              <Check type="checkbox" aria-label="Select all" defaultChecked />
            </ThSized>
            {columns.map(([label, w]) => (
              <ThSized key={label} $w={w}>
                <HeadCell>
                  <HeadText>{label}</HeadText>
                  <SortIcon />
                </HeadCell>
              </ThSized>
            ))}
            <th>Reverse DNS record</th>
          </tr>
        </thead>
        <tbody>
          <tr>
            <td>
              <Check type="checkbox" aria-label="Select 54.255.40.17" defaultChecked />
            </td>
            <td>–</td>
            <td>
              <TextLink href="#address">54.255.40.17</TextLink>
            </td>
            <td>Public IP</td>
            <td>eipalloc-082ec2e75c26d04d5</td>
            <td>–</td>
          </tr>
        </tbody>
      </Table>
    </TableWrap>
    <HScroll>
      <ScrollArrow dir="left" color="#a3a3a3" />
      <HTrack>
        <HThumb />
      </HTrack>
      <ScrollArrow dir="right" />
    </HScroll>
  </>
);

export default function App() {
  return (
    <Desktop>
      <GlobalStyle />
      <TopBar>
        <TopGroup>
          <button>Activities</button>
          <AppMenu>
            <ChromeIcon size={16} mono />
            Google Chrome
            <Caret w={10} h={5} />
          </AppMenu>
        </TopGroup>
        <span>Feb 27&nbsp; 17:17</span>
        <TopGroup $end>
          <TrayDiscord>
            <FaDiscord size={16} />
            <TrayDot />
          </TrayDiscord>
          <MdSignalWifi4Bar size={16} />
          <MdVolumeUp size={17} />
          <svg width="16" height="16" viewBox="0 0 16 16" aria-hidden>
            <path d="M3.500 4L.5 9h2l-.5 3.500 3-5H3z" fill="#f2f2f2" />
            <path d="M7 2.500h2V1h3v1.500h2V15H7z" fill="none" stroke="#f2f2f2" strokeWidth="1.3" />
          </svg>
          <Caret w={10} h={5} />
        </TopGroup>
      </TopBar>
      <BrowserChrome />
      <ConsoleHeader />
      <Body>
        <SideNavigation />
        <Main>
          <PageHead>
            <Title>
              Elastic IP addresses <Count>(1/1)</Count>
            </Title>
            <Button $width={48} aria-label="Refresh">
              <ReloadIcon />
            </Button>
            <Button $width={113} aria-haspopup="menu">
              Actions <Caret w={10} h={8} color="#545b64" />
            </Button>
            <Button $width={220} $primary>
              Allocate Elastic IP address
            </Button>
          </PageHead>
          <FilterRow>
            <FilterBox>
              <SearchIcon color="#687078" />
              <PlainInput $hint="#aab7b8" aria-label="Filter" placeholder="Filter Elastic IP addresses" />
            </FilterBox>
            <Pagination>
              <PageStep aria-label="Previous page">
                <Chevron />
              </PageStep>
              <PageNumber>1</PageNumber>
              <PageStep aria-label="Next page">
                <Chevron right />
              </PageStep>
              <GearButton aria-label="Preferences">
                <GearIcon />
              </GearButton>
            </Pagination>
          </FilterRow>
          <AddressTable />
          <SplitPanel>
            <SplitBar>
              <DragHandle aria-label="Resize panel" />
              <PanelButtons>
                <button aria-label="Small panel">
                  <PanelIcon top={8.5} />
                </button>
                <button aria-label="Medium panel">
                  <PanelIcon top={6} />
                </button>
                <button aria-label="Full panel">
                  <PanelIcon top={3.5} />
                </button>
              </PanelButtons>
            </SplitBar>
            <PanelBody>
              <Card>
                <CardHead>Summary</CardHead>
                <Columns>
                  {details.map((col, i) => (
                    <Column key={i}>
                      {col.map((d) => (
                        <DetailField key={d.name} {...d} />
                      ))}
                    </Column>
                  ))}
                </Columns>
              </Card>
              <VScroll $width={14}>
                <ScrollArrow dir="up" />
                <VTrack $inset={2}>
                  <VThumb $before={73} $size={154} $after={42} $color="#a8a8a8" />
                </VTrack>
                <ScrollArrow dir="down" />
              </VScroll>
            </PanelBody>
          </SplitPanel>
        </Main>
      </Body>
      <Footer>
        <FooterGroup>
          <a href="#feedback">Feedback</a>
          <NavMenu>
            English (US) <Caret />
          </NavMenu>
        </FooterGroup>
        <FooterGroup $end>
          <span>© 2022, Amazon Web Services, Inc. or its affiliates.</span>
          <a href="#privacy">Privacy</a>
          <a href="#terms">Terms</a>
          <a href="#cookies">Cookie preferences</a>
        </FooterGroup>
      </Footer>
      <Dock>
        {dockApps.map((a) => (
          <DockItem key={a.name} aria-label={a.name} $active={a.active} $running={a.running}>
            {a.icon}
          </DockItem>
        ))}
        <DockEnd aria-label="Show applications">
          <GridDots size={18} dot={4} round={1} />
        </DockEnd>
      </Dock>
    </Desktop>
  );
}
